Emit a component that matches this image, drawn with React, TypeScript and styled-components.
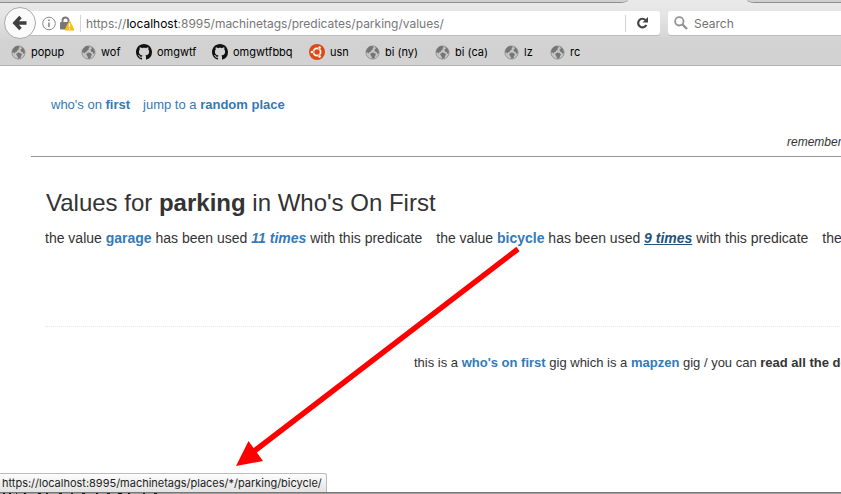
import React from "react";
import styled, { createGlobalStyle } from "styled-components";

const Global = createGlobalStyle`
  * { box-sizing: border-box; }
  html, body { margin: 0; padding: 0; background: #fff; overflow: hidden; }
`;

const Window = styled.div`
  position: relative;
  width: 841px;
  height: 494px;
  overflow: hidden;
  display: flex;
  flex-direction: column;
  background: #fff;
  color: #333;
  font-family: "Liberation Sans", Arial, sans-serif;
`;

const Chrome = styled.header`
  height: 66px;
  flex: none;
  background: linear-gradient(#e9e9e9 3px, #e2e2e2 20px, #d2d2d2 42px, #d2d2d2 65px);
  border-bottom: 1px solid #b1b1b1;
  font-family: Inter, sans-serif;
`;

const TabStrip = styled.div`
  height: 3px;
  display: flex;
  justify-content: space-between;
`;

const TabEdge = styled.div<{ $width: number; $side: "left" | "right" }>`
  width: ${(p) => p.$width}px;
  height: 3px;
  background: #d0d0d0;
  border-bottom: 1px solid #8c8c8c;
  border-bottom-${(p) => (p.$side === "left" ? "right" : "left")}-radius: 8px 3px;
`;

const NavBar = styled.div`
  height: 41px;
  display: flex;
  align-items: center;
  padding: 0 0 1px 4px;
`;

const BackButton = styled.div`
  width: 32px;
  height: 32px;
  flex: none;
  border-radius: 50%;
  border: 1px solid #aaa;
  background: #fafafa;
  display: flex;
  align-items: center;
  justify-content: center;
  z-index: 1;
`;

const Field = styled.div`
  height: 24px;
  flex: none;
  background: #fff;
  box-shadow: 0 1px 0 #bcbcbc;
  display: flex;
  align-items: center;
  font-size: 12px;
  color: #777;
  white-space: pre;
`;

const UrlField = styled(Field)`
  width: 640px;
  margin-left: -16px;
  padding-left: 22px;
  border-radius: 0 3px 3px 0;
`;

const SearchField = styled(Field)`
  width: 190px;
  margin-left: 8px;
  padding-left: 6px;
  border-radius: 3px 0 0 3px;
  gap: 6px;
  color: #737373;
`;

const Url = styled.span`
  flex: 1;
  letter-spacing: -0.01px;
  b { font-weight: 400; color: #000; }
`;

const Divider = styled.i<{ $left: number; $right: number }>`
  width: 1px;
  height: 17px;
  background: #d4d4d4;
  margin: 0 ${(p) => p.$right}px 0 ${(p) => p.$left}px;
`;

const BookmarkBar = styled.nav`
  height: 16px;
  display: flex;
  align-items: center;
  padding-left: 11px;
`;

const Bookmark = styled.div<{ $width: number }>`
  width: ${(p) => p.$width}px;
  display: flex;
  align-items: center;
  gap: 5px;
  font-size: 11px;
  line-height: 15px;
  color: #000;
  white-space: pre;
  svg { flex: none; }
`;

const Page = styled.main`
  flex: 1;
  width: 1110px;
  padding-left: 31px;
  white-space: nowrap;
`;

const PageHeader = styled.header`
  height: 91px;
  border-bottom: 1px solid #999;
  padding-top: 29px;
`;

const Menu = styled.div`
  display: flex;
  gap: 13px;
  padding-left: 20px;
  font-size: 13px;
  line-height: 20px;
`;

const Reminder = styled.div`
  padding: 19px 0 0 756px;
  font-size: 12px;
  line-height: 17px;
  font-style: italic;
`;

const Link = styled.a<{ $bold?: boolean; $italic?: boolean; $hover?: boolean }>`
  color: ${(p) => (p.$hover ? "#23527c" : "#337ab7")};
  font-weight: ${(p) => (p.$bold ? 700 : 400)};
  font-style: ${(p) => (p.$italic ? "italic" : "normal")};
  text-decoration: ${(p) => (p.$hover ? "underline" : "none")};
`;

const Content = styled.section`
  height: 169px;
  padding: 30px 0 0 14px;
`;

const Title = styled.h1`
  margin: 0;
  padding-left: 1px;
  font-size: 24px;
  line-height: 32px;
  font-weight: 400;
`;

const Values = styled.div`
  display: flex;
  gap: 14px;
  padding-top: 9px;
  font-size: 14px;
  line-height: 20px;
`;

const Footer = styled.footer`
  margin-left: 15px;
  border-top: 1px dotted #e8e8e8;
  padding: 26px 0 0 368px;
  font-size: 13px;
  line-height: 20px;
`;

const Arrow = styled.svg`
  position: absolute;
  left: 0;
  top: 0;
`;

const Backdrop = styled.svg`
  position: absolute;
  left: 0;
  top: 492px;
`;

const Status = styled.div`
  position: absolute;
  left: 0;
  top: 473px;
  width: 327px;
  height: 19px;
  padding-left: 2px;
  border: 1px solid #bcbcbc;
  border-width: 1px 1px 0 0;
  border-top-right-radius: 3px;
  background: linear-gradient(#fdfdfd, #e3e3e3);
  font: 11px/19px Inter, sans-serif;
  letter-spacing: -0.01px;
  color: #222;
  white-space: nowrap;
`;

const Globe = () => (
  <svg width="15" height="15" viewBox="0 0 15 15">
    <circle cx="7.5" cy="7.5" r="6.600" fill="#c4c4c4" stroke="#8a8a8a" strokeWidth=".8" />
    <path d="M1 7.500C1.500 3.500 4 1 7 1L9 2 7.500 3.200 8 4.500 6.500 5 6 6.500 4.500 7 3.500 8.500 2.500 7.500zM10 1.500L12.500 3.500 14 7.500 12.500 9 11.500 7 10 6.500 9.500 4.500 11 3.500zM5 9L7.500 7.500 9.500 8 11 9.500 10 11 9.500 13 7.500 14 6.500 11.500z" fill="#757575" />
  </svg>
);

const GitHub = () => (
  <svg width="16" height="16" viewBox="0 0 16 16">
    <path fill="#111" d="M8 0C3.580 0 0 3.580 0 8c0 3.540 2.290 6.530 5.470 7.590.4.070.55-.17.55-.38 0-.19-.01-.82-.01-1.490-2.010.37-2.530-.49-2.690-.94-.09-.23-.48-.94-.82-1.130-.28-.15-.68-.52-.01-.53.63-.01 1.080.58 1.230.82.72 1.210 1.870.87 2.330.66.07-.52.28-.87.51-1.070-1.780-.2-3.640-.89-3.640-3.950 0-.87.31-1.590.82-2.150-.08-.2-.36-1.020.08-2.120 0 0 .67-.21 2.200.82.64-.18 1.320-.27 2-.27s1.360.09 2 .27c1.530-1.040 2.200-.82 2.200-.82.44 1.100.16 1.920.08 2.120.51.56.82 1.270.82 2.150 0 3.070-1.870 3.750-3.650 3.950.29.25.54.73.54 1.480 0 1.070-.01 1.930-.01 2.200 0 .21.15.46.55.38A8.010 8.010 0 0 0 16 8c0-4.420-3.580-8-8-8z" />
  </svg>
);

const Ubuntu = () => (
  <svg width="16" height="16" viewBox="0 0 16 16">
    <circle cx="8" cy="8" r="8" fill="#dd4814" />
    <circle cx="8" cy="8" r="3.600" fill="none" stroke="#fff" strokeWidth="1.700" />
    <g fill="#fff" stroke="#dd4814" strokeWidth=".6">
      <circle cx="3" cy="8" r="1.600" />
      <circle cx="10.600" cy="3.600" r="1.600" />
      <circle cx="10.600" cy="12.400" r="1.600" />
    </g>
  </svg>
);

const icons = { globe: Globe, github: GitHub, ubuntu: Ubuntu };

const bookmarks: { label: string; icon: keyof typeof icons; width: number }[] = [
  { label: "popup", icon: "globe", width: 70 },
  { label: "wof", icon: "globe", width: 55 },
  { label: "omgwtf", icon: "github", width: 76 },
  { label: "omgwtfbbq", icon: "github", width: 97 },
  { label: "usn", icon: "ubuntu", width: 56 },
  { label: "bi (ny)", icon: "globe", width: 70 },
  { label: "bi (ca)", icon: "globe", width: 69 },
  { label: "lz", icon: "globe", width: 46 },
  { label: "rc", icon: "globe", width: 46 },
];

const values = [
  { name: "garage", count: 11, hover: false },
  { name: "bicycle", count: 9, hover: true },
  { name: "street", count: 4, hover: false },
];

export default function App() {
  return (
    <Window>
      <Global />
      <Chrome>
        <TabStrip>
          <TabEdge $width={628} $side="left" />
          <TabEdge $width={94} $side="right" />
        </TabStrip>
        <NavBar>
          <BackButton>
            <svg width="16" height="16" viewBox="0 0 16 16" fill="none" stroke="#3f3f3f" strokeWidth="3.400">
              <path d="M8.500 2L2.800 8l5.700 6M3 8h11.500" />
            </svg>
          </BackButton>
          <UrlField>
            <svg width="33" height="15" viewBox="0 0 33 15">
              <circle cx="7" cy="7.500" r="6.300" fill="none" stroke="#8b8b8b" />
              <path d="M7 6.500V11M7 3.500V5" stroke="#777" strokeWidth="1.400" />
              <path d="M20.500 7V4.500a3 3 0 0 1 6 0V7" fill="none" stroke="#777" strokeWidth="1.900" />
              <rect x="18" y="6" width="10.500" height="7.500" rx="1" fill="#777" />
              <path d="M27.500 5L32 14H23z" fill="#ffbf00" stroke="#ffbf00" strokeLinejoin="round" />
              <path d="M27.500 7.500v3.500M27.500 12v1.300" stroke="#fff" strokeWidth="1.300" />
            </svg>
            <Divider $left={5} $right={5} />
            <Url>https://<b>localhost</b>:8995/machinetags/predicates/parking/values/</Url>
            <Divider $left={0} $right={10} />
            <svg width="24" height="14" viewBox="0 0 24 14">
              <path d="M9.500 4A4.300 4.300 0 1 0 10.300 9" fill="none" stroke="#444" strokeWidth="2.200" />
              <path d="M12 1v5.500H6.500z" fill="#444" />
            </svg>
          </UrlField>
          <SearchField>
            <svg width="14" height="14" viewBox="0 0 14 14" fill="none" stroke="#949494">
              <circle cx="5.300" cy="5.300" r="4.200" strokeWidth="1.800" />
              <path d="M8.500 8.500L13 13" strokeWidth="2.400" />
            </svg>
            Search
          </SearchField>
        </NavBar>
        <BookmarkBar>
          {bookmarks.map(({ label, icon, width }) => {
            const Icon = icons[icon];
            return (
              <Bookmark key={label} $width={width}>
                <Icon />
                {label}
              </Bookmark>
            );
          })}
        </BookmarkBar>
      </Chrome>
      <Page>
        <PageHeader>
          <Menu>
            <Link>who's on <b>first</b></Link>
            <Link>jump to a <b>random place</b></Link>
          </Menu>
          <Reminder>remember</Reminder>
        </PageHeader>
        <Content>
          <Title>Values for <b>parking</b> in Who's On First</Title>
          <Values>
            {values.map((v) => (
              <span key={v.name}>
                the value <Link $bold>{v.name}</Link> has been used{" "}
                <Link $bold $italic $hover={v.hover}>{v.count} times</Link> with this predicate
              </span>
            ))}
          </Values>
        </Content>
        <Footer>
          this is a <Link $bold>who's on first</Link> gig which is a <Link $bold>mapzen</Link> gig / you can{" "}
          <b>read all the docs</b>
        </Footer>
      </Page>
      <Arrow width="841" height="494" viewBox="0 0 841 494">
        <path d="M518 249L253 452" stroke="#f00" strokeWidth="5.400" />
        <path d="M236 466L248.500 441L263 461z" fill="#f00" />
      </Arrow>
      <Backdrop width="841" height="2" viewBox="0 0 841 2">
        <path d="M0 .5H841" stroke="#777" />
        <path d="M0 1.500H841" stroke="#a0a0a0" />
        <path d="M3 1.500h2m4 0h2m5 0h1m7 0h2m12 0h3m5 0h2m11 0h3m9 0h2m9 0h3m11 0h2m9 0h3m8 0h4m6 0h2m13 0h2m9 0h3" stroke="#111" />
      </Backdrop>
      <Status>https://localhost:8995/machinetags/places/*/parking/bicycle/</Status>
    </Window>
  );
}
